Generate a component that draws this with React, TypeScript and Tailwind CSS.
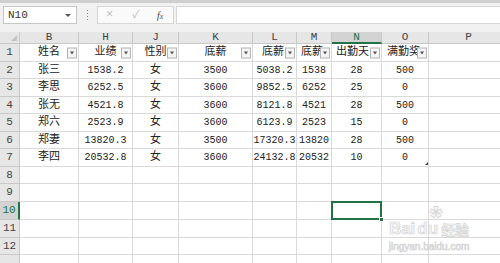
type Col = { letter: string; w: string };

const cols: Col[] = [
  { letter: "B", w: "w-[59px]" },
  { letter: "H", w: "w-[54px]" },
  { letter: "J", w: "w-[46px]" },
  { letter: "K", w: "w-[74px]" },
  { letter: "L", w: "w-[44px]" },
  { letter: "M", w: "w-[35px]" },
  { letter: "N", w: "w-[50px]" },
  { letter: "O", w: "w-[47px]" },
  { letter: "P", w: "w-[80px]" },
];

// row heights alternate so the grid lands on the screenshot's lines
const rowH = [
  "h-[18px]", "h-[17px]", "h-[18px]", "h-[17px]", "h-[18px]", "h-[17px]",
  "h-[18px]", "h-[17px]", "h-[18px]", "h-[18px]", "h-[18px]", "h-[17px]", "h-[18px]",
];

// header row: only what is visible before the filter button
const headers = [
  { text: "姓名", cls: "justify-center" },
  { text: "业绩", cls: "justify-center" },
  { text: "性别", cls: "justify-center" },
  { text: "底薪", cls: "justify-center" },
  { text: "底薪", cls: "justify-start pl-[9px]" },
  { text: "底薪", cls: "justify-start pl-[4px]" },
  { text: "出勤天", cls: "justify-start pl-[4px]" },
  { text: "满勤奖", cls: "justify-start pl-[5px]" },
];

const data = [
  ["张三", "1538.2", "女", "3500", "5038.2", "1538", "28", "500"],
  ["李思", "6252.5", "女", "3600", "9852.5", "6252", "25", "0"],
  ["张无", "4521.8", "女", "3600", "8121.8", "4521", "28", "500"],
  ["郑六", "2523.9", "女", "3600", "6123.9", "2523", "15", "0"],
  ["郑妻", "13820.3", "女", "3500", "17320.3", "13820", "28", "500"],
  ["李四", "20532.8", "女", "3600", "24132.8", "20532", "10", "0"],
];

const cjk = /[\u4e00-\u9fff]/;
const grid = "border-r border-b border-[#dadada]";

function FilterBtn() {
  return (
    <span className="absolute right-[1px] top-1/2 -translate-y-1/2 flex h-[11px] w-[10px] items-center justify-center border border-[#b5b5b5] bg-[#f4f4f4]">
      <span className="h-0 w-0 border-x-[2.5px] border-t-[3px] border-x-transparent border-t-[#555]" />
    </span>
  );
}

function HeaderRow() {
  return (
    <div className="flex h-[12px]">
      <div className="relative w-[20px] shrink-0 border-r border-b border-[#c8c8c8] bg-[#e6e6e6]">
        <span className="absolute right-[2px] bottom-[2px] h-0 w-0 border-l-[6px] border-b-[6px] border-l-transparent border-b-[#c4c4c4]" />
      </div>
      {cols.map((c) =>
        c.letter === "N" ? (
          <div
            key={c.letter}
            className={`${c.w} shrink-0 flex items-center justify-center border-r border-b-2 border-r-[#c8c8c8] border-b-[#217346] bg-[#d3d3d3] text-[11px] leading-none text-[#217346]`}
          >
            {c.letter}
          </div>
        ) : (
          <div
            key={c.letter}
            className={`${c.w} shrink-0 flex items-center justify-center border-r border-b border-[#c8c8c8] bg-[#e6e6e6] text-[11px] leading-none text-[#444]`}
          >
            {c.letter}
          </div>
        )
      )}
    </div>
  );
}

function RowHead({ n, h }: { n: number; h: string }) {
  if (n === 10) {
    return (
      <div className={`${h} w-[20px] shrink-0 flex items-center justify-center border-b border-r-2 border-b-[#c8c8c8] border-r-[#217346] bg-[#d3d3d3] text-[11px] text-[#217346]`}>
        {n}
      </div>
    );
  }
  return (
    <div className={`${h} w-[20px] shrink-0 flex items-center justify-center border-r border-b border-[#c8c8c8] bg-[#e6e6e6] text-[11px] text-[#444]`}>
      {n < 13 ? n : null}
    </div>
  );
}

function Cell({ w, text }: { w: string; text: string }) {
  const size = cjk.test(text) ? "text-[11px]" : "text-[10px]";
  return (
    <div className={`${w} shrink-0 flex items-center justify-center overflow-hidden whitespace-nowrap ${grid} ${size} text-[#222]`}>
      {text}
    </div>
  );
}

export default function App() {
  return (
    <div
      className="relative h-[263px] w-[500px] overflow-hidden bg-white"
      style={{ fontFamily: '"Liberation Mono","Noto Sans CJK SC",monospace' }}
    >
      {/* formula bar */}
      <div className="h-[3px] bg-[#cfcfcf]" />
      <div className="flex h-[29px] items-start bg-[#f1f1f1] pt-[3px]">
        <div className="ml-[3px] flex h-[18px] w-[74px] items-center justify-between border border-[#c6c6c6] bg-white pl-[4px] pr-[5px] text-[11px] text-[#333]">
          <span>N10</span>
          <span className="h-0 w-0 border-x-[3px] border-t-[3px] border-x-transparent border-t-[#555]" />
        </div>
        <div className="flex h-[18px] w-[20px] flex-col items-center justify-center gap-[2px]">
          <span className="h-[1px] w-[1px] bg-[#888]" />
          <span className="h-[1px] w-[1px] bg-[#888]" />
          <span className="h-[1px] w-[1px] bg-[#888]" />
          <span className="h-[1px] w-[1px] bg-[#888]" />
        </div>
        <div className="flex h-[18px] w-[77px] items-center border border-[#d6d6d6] bg-[#fafafa] text-[#bdbdbd]">
          <span className="ml-[8px] text-[12px] leading-none">×</span>
          <span className="ml-[19px] text-[11px] leading-none">✓</span>
          <span
            className="ml-[17px] text-[11px] italic leading-none text-[#555]"
            style={{ fontFamily: '"Liberation Serif",serif' }}
          >
            f<span className="text-[8px]">x</span>
          </span>
        </div>
        <div className="ml-[2px] h-[18px] flex-1 border-y border-l border-[#d6d6d6] bg-white" />
      </div>

      <HeaderRow />

      {rowH.map((h, i) => {
        const n = i + 1;
        return (
          <div key={n} className="flex">
            <RowHead n={n} h={h} />
            {cols.map((c, j) => {
              if (n === 1 && j < 8) {
                const hd = headers[j];
                return (
                  <div key={c.letter} className={`${c.w} ${h} relative shrink-0 ${grid}`}>
                    <div className={`flex h-full items-center whitespace-nowrap text-[11px] text-[#222] ${hd.cls}`}>
                      {hd.text}
                    </div>
                    <FilterBtn />
                  </div>
                );
              }
              if (n >= 2 && n <= 7 && j < 8) {
                return (
                  <div key={c.letter} className={`${h} relative flex`}>
                    <Cell w={c.w} text={data[n - 2][j]} />
                    {n === 7 && j === 7 && (
                      <span className="absolute right-[1px] bottom-[2px] h-0 w-0 border-l-[3px] border-b-[3px] border-l-transparent border-b-[#444]" />
                    )}
                  </div>
                );
              }
              if (n === 10 && c.letter === "N") {
                return (
                  <div key={c.letter} className={`${c.w} ${h} relative shrink-0 ${grid}`}>
                    <div className="absolute -left-px -top-px h-[19px] w-[51px] border-2 border-[#217346]" />
                    <div className="absolute -right-[3px] -bottom-[3px] h-[5px] w-[5px] border border-white bg-[#217346]" />
                  </div>
                );
              }
              return <div key={c.letter} className={`${c.w} ${h} shrink-0 ${grid}`} />;
            })}
          </div>
        );
      })}

      {/* baidu watermark */}
      <div
        className="pointer-events-none absolute left-[385px] top-[206px] flex w-[88px] flex-col items-center text-[#f6f6f6] [-webkit-text-stroke:0.7px_#d4d4d4]"
        style={{ fontFamily: '"Liberation Sans","Noto Sans CJK SC",sans-serif' }}
      >
        <div className="ml-[14px] text-[13px] leading-none">✿</div>
        <div className="mt-[1px] flex items-end text-[17px] font-bold leading-none">
          <span>Bai</span>
          <span className="ml-[2px]">du</span>
          <span className="ml-[3px] text-[14px]">经验</span>
        </div>
        <div className="mt-[5px] text-[10px] leading-none">jingyan.baidu.com</div>
      </div>
    </div>
  );
}
